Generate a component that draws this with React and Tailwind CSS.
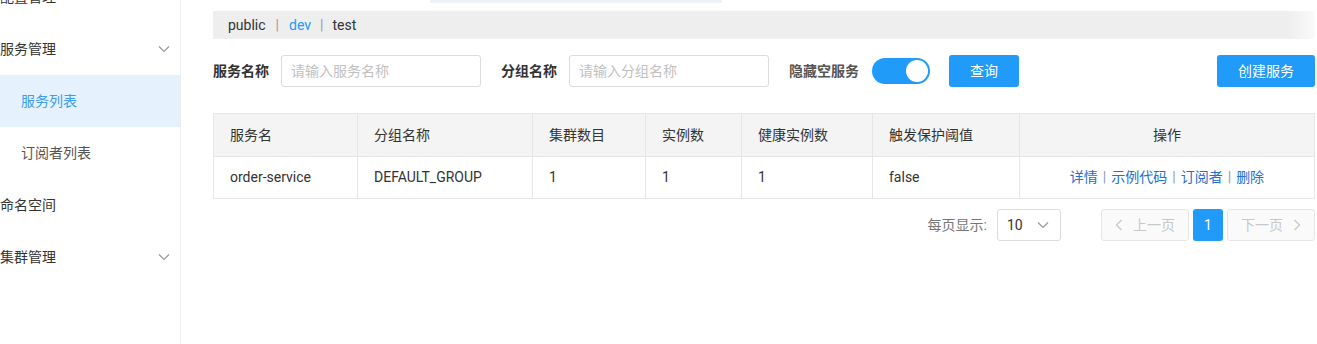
import React from "react";

const font = { fontFamily: 'Roboto, "Noto Sans CJK SC", "Noto Sans", sans-serif' };

function Chevron({ className = "" }) {
  return (
    <svg width="12" height="8" viewBox="0 0 12 8" className={className}>
      <path d="M1 1.5 L6 6.5 L11 1.5" fill="none" stroke="#999" strokeWidth="1.2" />
    </svg>
  );
}

function NavItem({ label, chevron, sub, active }) {
  return (
    <div
      className={
        "h-[52px] flex items-center justify-between pr-[10px] text-[14px] " +
        (sub ? "pl-[21px] " : "pl-0 ") +
        (active ? "bg-[#e5f2fd] text-[#3c9cf0]" : sub ? "text-[#555]" : "text-[#333]")
      }
    >
      <span>{label}</span>
      {chevron && <Chevron />}
    </div>
  );
}

export default function App() {
  const cols = [
    { w: "w-[144px]", h: "服务名", v: "order-service" },
    { w: "w-[175px]", h: "分组名称", v: "DEFAULT_GROUP" },
    { w: "w-[113px]", h: "集群数目", v: "1" },
    { w: "w-[96px]", h: "实例数", v: "1" },
    { w: "w-[131px]", h: "健康实例数", v: "1" },
    { w: "w-[147px]", h: "触发保护阈值", v: "false" },
  ];
  return (
    <div className="w-[1317px] h-[344px] overflow-hidden bg-white flex" style={font}>
      {/* Sidebar */}
      <div className="w-[181px] shrink-0 border-r border-[#eee] h-full overflow-hidden">
        <div className="mt-[-29px]">
          <NavItem label="配置管理" chevron />
          <NavItem label="服务管理" chevron />
          <NavItem label="服务列表" sub active />
          <NavItem label="订阅者列表" sub />
          <NavItem label="命名空间" />
          <NavItem label="集群管理" chevron />
        </div>
      </div>

      {/* Main */}
      <div className="flex-1 pl-[32px] pr-[2px] relative">
        <div className="ml-[217px] w-[292px] h-[3px] bg-[#eef1f8]" />
        <div className="mt-[8px] h-[28px] bg-[#eeeeee] flex items-center pl-[15px] text-[14px] text-[#333]">
          <span>public</span>
          <span className="mx-[10px] text-[#999]">|</span>
          <span className="text-[#209bfa]">dev</span>
          <span className="mx-[9px] text-[#999]">|</span>
          <span>test</span>
        </div>
        <div className="absolute right-0 top-0 w-[30px] h-[45px] bg-gradient-to-l from-white/80 to-transparent" />

        {/* Form row */}
        <div className="mt-[16px] h-[32px] flex items-center text-[14px]">
          <span className="font-bold text-[#333] w-[68px]">服务名称</span>
          <div className="w-[200px] h-[32px] border border-[#dcdcdc] rounded-[3px] flex items-center pl-[9px] text-[#c0c0c0]">
            请输入服务名称
          </div>
          <span className="ml-[20px] font-bold text-[#333] w-[68px]">分组名称</span>
          <div className="w-[200px] h-[32px] border border-[#dcdcdc] rounded-[3px] flex items-center pl-[9px] text-[#c0c0c0]">
            请输入分组名称
          </div>
          <span className="ml-[20px] font-bold text-[#555]">隐藏空服务</span>
          <div className="ml-[13px] w-[58px] h-[26px] rounded-full bg-[#209bfa] flex items-center justify-end pr-[2px]">
            <div className="w-[22px] h-[22px] rounded-full bg-white" />
          </div>
          <div className="ml-[19px] w-[70px] h-[32px] rounded-[3px] bg-[#209bfa] text-white flex items-center justify-center">
            查询
          </div>
          <div className="ml-auto w-[98px] h-[32px] rounded-[3px] bg-[#209bfa] text-white flex items-center justify-center">
            创建服务
          </div>
        </div>

        {/* Table */}
        <div className="mt-[26px] border border-[#e6e6e6] text-[14px] text-[#333]">
          <div className="flex h-[43px] bg-[#f4f4f4] border-b border-[#e6e6e6]">
            {cols.map((c) => (
              <div key={c.h} className={c.w + " shrink-0 border-r border-[#e6e6e6] flex items-center pl-[16px]"}>
                {c.h}
              </div>
            ))}
            <div className="flex-1 flex items-center justify-center">操作</div>
          </div>
          <div className="flex h-[41px]">
            {cols.map((c) => (
              <div key={c.h} className={c.w + " shrink-0 border-r border-[#e6e6e6] flex items-center pl-[16px]"}>
                {c.v}
              </div>
            ))}
            <div className="flex-1 flex items-center justify-center text-[#2470d0]">
              <span>详情</span>
              <span className="mx-[5px] text-[#8a9bb5]">|</span>
              <span>示例代码</span>
              <span className="mx-[5px] text-[#8a9bb5]">|</span>
              <span>订阅者</span>
              <span className="mx-[5px] text-[#8a9bb5]">|</span>
              <span>删除</span>
            </div>
          </div>
        </div>

        {/* Pagination */}
        <div className="mt-[10px] h-[32px] flex items-center justify-end text-[14px]">
          <span className="text-[#777]">每页显示:</span>
          <div className="ml-[10px] w-[64px] h-[32px] border border-[#dcdcdc] rounded-[3px] flex items-center justify-between pl-[9px] pr-[11px] text-[#333]">
            <span>10</span>
            <Chevron />
          </div>
          <div className="ml-[40px] w-[88px] h-[32px] border border-[#e6e6e6] bg-[#fafafa] rounded-[3px] flex items-center justify-center text-[#c8c8c8]">
            <svg width="8" height="12" viewBox="0 0 8 12" className="mr-[10px]">
              <path d="M6.5 1 L1.5 6 L6.5 11" fill="none" stroke="#c8c8c8" strokeWidth="1.3" />
            </svg>
            上一页
          </div>
          <div className="ml-[4px] w-[30px] h-[32px] rounded-[3px] bg-[#209bfa] text-white flex items-center justify-center">
            1
          </div>
          <div className="ml-[4px] w-[88px] h-[32px] border border-[#e6e6e6] bg-[#fafafa] rounded-[3px] flex items-center justify-center text-[#c8c8c8]">
            下一页
            <svg width="8" height="12" viewBox="0 0 8 12" className="ml-[10px]">
              <path d="M1.5 1 L6.5 6 L1.5 11" fill="none" stroke="#c8c8c8" strokeWidth="1.3" />
            </svg>
          </div>
        </div>
      </div>
    </div>
  );
}
